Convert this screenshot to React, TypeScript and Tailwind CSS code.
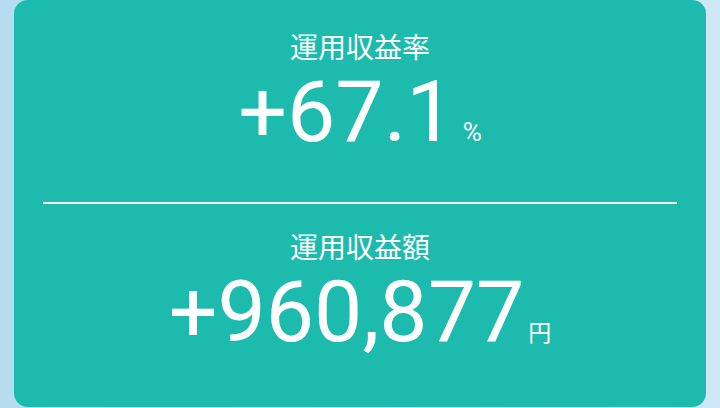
// 運用実績カード — 収益率 / 収益額

const numFont = { fontFamily: '"Roboto", "Noto Sans CJK JP", sans-serif' };

function Stat({ label, value, unit, unitClass }: { label: string; value: string; unit: string; unitClass: string }) {
  return (
    <div className="flex flex-col items-center">
      <p className="text-[28px] leading-[28px] text-white">{label}</p>
      <div className="mt-[6px] flex items-baseline" style={numFont}>
        <span className="text-[86px] leading-[86px] text-white">{value}</span>
        <span className={unitClass}>{unit}</span>
      </div>
    </div>
  );
}

export default function App() {
  return (
    <main
      className="h-[408px] w-[720px] overflow-hidden bg-gradient-to-r from-[#b6dcef] to-[#cde7f6] px-[14px]"
      style={{ fontFamily: '"Roboto", "Noto Sans CJK JP", sans-serif' }}
    >
      <section className="flex h-[407px] flex-col rounded-[14px] bg-[#1dbbad] pt-[35px]">
        <Stat label="運用収益率" value="+67.1" unit="%" unitClass="ml-[8px] text-[26px] text-white" />

        <div className="mx-[29px] mt-[47px] h-[2px] bg-white" />

        <div className="mt-[31px]">
          <Stat label="運用収益額" value="+960,877" unit="円" unitClass="ml-[4px] text-[23px] text-white" />
        </div>
      </section>
    </main>
  );
}
